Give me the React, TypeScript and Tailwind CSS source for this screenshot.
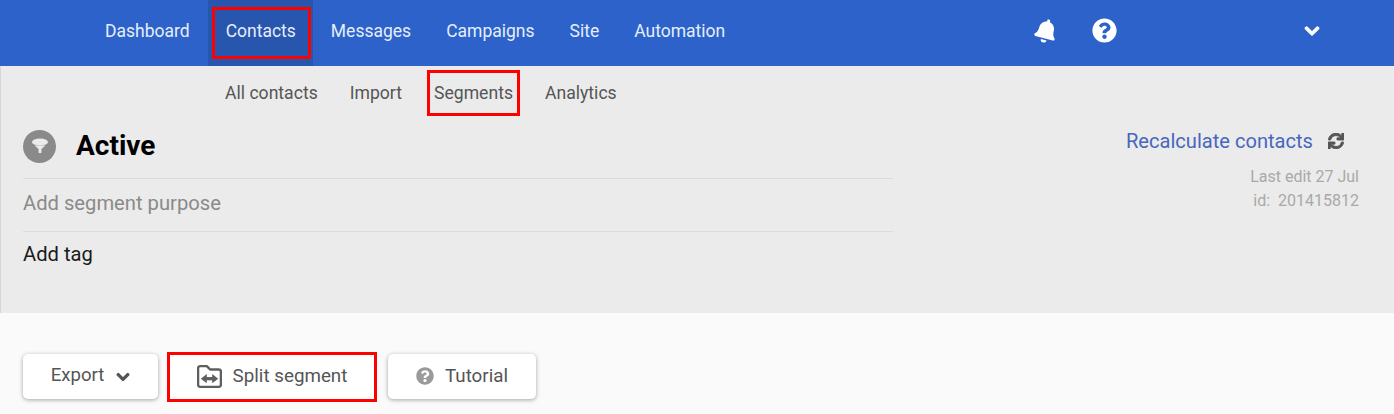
import { FaBell, FaChevronDown, FaQuestionCircle, FaSync } from "react-icons/fa";

const mainLinks = ["Dashboard", "Contacts", "Messages", "Campaigns", "Site", "Automation"];
const subLinks = ["All contacts", "Import", "Segments", "Analytics"];

const FunnelIcon = () => (
  <svg viewBox="0 0 20 20" className="w-5 h-5" fill="#ebebeb">
    <ellipse cx="10" cy="6" rx="8" ry="3.6" />
    <path d="M4.5 9.5 L15.5 9.5 L11.4 13 L11.4 17 L8.6 17 L8.6 13 Z" />
  </svg>
);

const SplitIcon = () => (
  <svg viewBox="2 2 23 21" className="w-[25px] h-[23px]" fill="none" stroke="#5f5f5f" strokeWidth="2.2">
    <path d="M3 6.5 V20 a2 2 0 0 0 2 2 H22 a2 2 0 0 0 2 -2 V8 a2 2 0 0 0 -2 -2 H14 L11 3 H5 a2 2 0 0 0 -2 2 Z" strokeLinejoin="round" />
    <path d="M8 14.5 H19" strokeWidth="3" />
    <path d="M5.5 14.5 L11 10.2 V18.8 Z M21.5 14.5 L16 10.2 V18.8 Z" fill="#5f5f5f" stroke="none" />
  </svg>
);

const App = () => {
  return (
    <div className="w-[1394px] h-[414px] overflow-hidden bg-[#fafafa] font-['Roboto',sans-serif]">
      <header className="h-[66px] bg-[#2c62c9] flex items-center pl-[87.5px]">
        <nav className="flex h-full">
          {mainLinks.map((link) => (
            <a
              key={link}
              className={`relative flex items-center px-[17.5px] text-[17.5px] pb-[4px] text-[#e6eefb] ${
                link === "Contacts" ? "bg-[#2855ae]" : ""
              } ${link === "Dashboard" ? "mr-[1px]" : ""}`}
            >
              {link}
              {link === "Contacts" && (
                <span className="absolute left-[4px] right-[2px] top-[7px] h-[52px] border-[3px] border-[#fe0000]" />
              )}
            </a>
          ))}
        </nav>
        <div className="ml-auto flex items-center pb-[5px] text-white">
          <FaBell className="w-6 h-6 rotate-[15deg]" />
          <FaQuestionCircle className="w-[25px] h-[25px] ml-[34px]" />
          <FaChevronDown className="w-4 h-4 ml-[187px] mr-[74px] stroke-[40]" />
        </div>
      </header>

      <section className="h-[247px] bg-[#ebebeb] border-l border-[#d6d6d6]">
        <nav className="flex gap-[32px] pl-[224px] h-[54px] items-center text-[17.6px] text-[#555555]">
          {subLinks.map((link) => (
            <a key={link} className="relative">
              {link}
              {link === "Segments" && (
                <span className="absolute -left-[7px] -right-[7px] -top-[10px] h-[46px] border-[3px] border-[#fe0000]" />
              )}
            </a>
          ))}
        </nav>

        <div className="flex justify-between">
          <div className="w-[892px] pl-[22px]">
            <div className="flex items-center h-[59px] pb-[6px] border-b border-[#dcdcdc]">
              <span className="w-[33px] h-[33px] rounded-full bg-[#8a8a8a] flex items-center justify-center">
                <FunnelIcon />
              </span>
              <h1 className="ml-[20px] text-[28px] font-bold text-black">Active</h1>
            </div>
            <p className="h-[53px] pb-[3px] flex items-center border-b border-[#dcdcdc] text-[20.2px] text-[#8a8a8a]">
              Add segment purpose
            </p>
            <p className="h-[45px] flex items-center text-[20.2px] text-[#1a1a1a]">Add tag</p>
          </div>

          <div className="pr-[35px] flex flex-col items-end">
            <div className="flex items-center gap-[15px] mt-[6px] mr-[15px]">
              <a className="text-[20.1px] text-[#4767bd]">Recalculate contacts</a>
              <FaSync className="w-4 h-4 text-[#555555] stroke-[30]" />
            </div>
            <p className="mt-[9px] text-[16px] leading-[24px] text-[#a9a9a9]">Last edit 27 Jul</p>
            <p className="text-[16px] leading-[24px] text-[#a9a9a9]">id:&nbsp; 201415812</p>
          </div>
        </div>
      </section>

      <div className="flex items-start pt-[41px] pl-[23px]">
        <button className="h-[45px] w-[135px] pb-[1px] rounded-[5px] bg-white shadow-[0_1px_4px_rgba(0,0,0,0.35)] flex items-center justify-center gap-[12px] text-[18.6px] text-[#555555]">
          Export
          <FaChevronDown className="w-[14px] h-[14px] stroke-[40] mt-[2px]" />
        </button>
        <button className="relative ml-[12px] h-[45px] w-[204px] pb-[1px] bg-white flex items-center justify-center gap-[11px] text-[18.8px] text-[#555555]">
          <SplitIcon />
          Split segment
          <span className="absolute -left-[3px] -right-[3px] -top-[2px] -bottom-[3px] border-[3px] border-[#fe0000]" />
        </button>
        <button className="ml-[14px] h-[45px] w-[148px] pb-[1px] rounded-[5px] bg-white shadow-[0_1px_4px_rgba(0,0,0,0.35)] flex items-center justify-center gap-[11px] text-[18.8px] text-[#555555]">
          <FaQuestionCircle className="w-[18px] h-[18px] text-[#9a9a9a]" />
          Tutorial
        </button>
      </div>
    </div>
  );
};

export default App;
